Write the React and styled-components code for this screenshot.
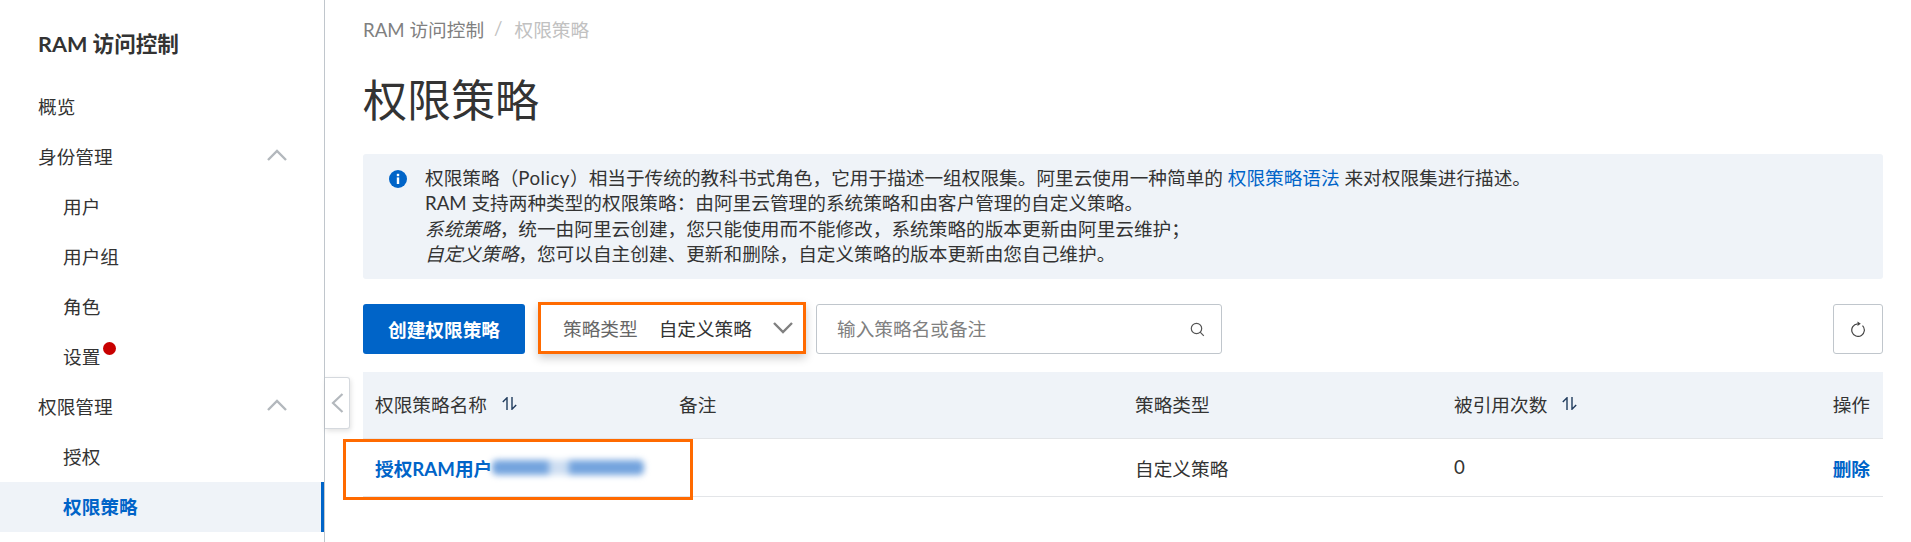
import React from 'react';
import styled, { createGlobalStyle } from 'styled-components';

const GlobalStyle = createGlobalStyle`
    html, body {
        margin: 0;
        padding: 0;
        background: #fff;
        overflow: hidden;
    }
    body {
        font-family: Lato, "Noto Sans CJK SC", sans-serif;
        font-size: 18.67px;
        color: #333;
    }
    * {
        box-sizing: border-box;
    }
`;

const Page = styled.div`
    display: flex;
    width: 1911px;
    height: 542px;
    overflow: hidden;
`;

const Sidebar = styled.aside`
    flex: none;
    width: 325px;
    height: 100%;
    border-right: 1px solid #c0c6cc;
`;

const SideTitle = styled.div`
    height: 82px;
    padding: 29px 0 0 38px;
    font-size: 21.6px;
    line-height: 30px;
    font-weight: 700;
`;

const NavRow = styled.div`
    position: relative;
    display: flex;
    align-items: center;
    justify-content: space-between;
    height: 50px;
    padding: 0 33px 4px ${(p) => (p.$sub ? '63px' : '38px')};
    color: ${(p) => (p.$active ? '#0064c8' : '#333')};
    font-weight: ${(p) => (p.$active ? 700 : 400)};
    background: ${(p) => (p.$active ? '#eff3f8' : 'transparent')};
    border-right: 3px solid ${(p) => (p.$active ? '#0064c8' : 'transparent')};
`;

const NavLabel = styled.span`
    position: relative;
`;

const RedDot = styled.i`
    position: absolute;
    top: 0;
    right: -16px;
    width: 13px;
    height: 13px;
    border-radius: 50%;
    background: #c80000;
`;

const CollapseHandle = styled.div`
    position: absolute;
    left: 325px;
    top: 377px;
    width: 25px;
    height: 52px;
    display: flex;
    align-items: center;
    justify-content: center;
    background: #fff;
    border: 1px solid #d5d9de;
    border-left: none;
    border-radius: 0 3px 3px 0;
    box-shadow: 1px 2px 5px rgba(0, 0, 0, 0.12);
`;

const Main = styled.main`
    flex: 1;
    min-width: 0;
    padding: 0 28px 0 38px;
`;

const Breadcrumb = styled.div`
    display: flex;
    align-items: center;
    gap: 10px;
    height: 58px;
    padding-bottom: 2px;
    color: #808080;
`;

const CrumbSep = styled.span`
    margin-right: 2px;
    color: #c1c1c1;
`;

const CrumbCurrent = styled.span`
    color: #c1c1c1;
`;

const PageTitle = styled.h1`
    margin: 0;
    height: 96px;
    padding-top: 13px;
    font-size: 44px;
    line-height: 58px;
    font-weight: 400;
    color: #333;
`;

const Notice = styled.div`
    display: flex;
    gap: 18px;
    height: 125px;
    padding: 12px 0 0 26px;
    background: #eff3f8;
    border-radius: 3px;
    line-height: 25.33px;
`;

const NoticeIcon = styled.svg`
    flex: none;
    width: 18px;
    height: 18px;
    margin-top: 4px;
`;

const PolicyWord = styled.span`
    letter-spacing: 0.5px;
`;

const NoticeLink = styled.a`
    color: #0064c8;
`;

const NoticeItalic = styled.em`
    font-style: italic;
`;

const Toolbar = styled.div`
    display: flex;
    align-items: flex-start;
    height: 50px;
    margin-top: 25px;
`;

const PrimaryButton = styled.button`
    width: 162px;
    height: 50px;
    padding: 0 0 2px;
    border: none;
    border-radius: 3px;
    background: #0064c8;
    color: #fff;
    font: inherit;
    font-weight: 700;
`;

const SelectBox = styled.div`
    display: flex;
    align-items: center;
    width: 268px;
    height: 52px;
    margin: -2px 0 0 13px;
    padding: 0 0 1px 22px;
    background: #fff;
    border: 3px solid #ff6a00;
    box-shadow: 0 4px 9px rgba(0, 0, 0, 0.2);
`;

const SelectLabel = styled.span`
    color: #666;
    margin-right: 21px;
`;

const SelectValue = styled.span`
    color: #333;
    margin-right: 20px;
`;

const SearchBox = styled.div`
    display: flex;
    align-items: center;
    justify-content: space-between;
    width: 406px;
    height: 50px;
    margin-left: 10px;
    padding: 0 16px 3px 20px;
    border: 1px solid #c0c6cc;
    border-radius: 3px;
    color: #808080;
`;

const SearchIcon = styled.svg`
    width: 15px;
    height: 15px;
    margin-top: 3px;
`;

const RefreshButton = styled.button`
    display: flex;
    align-items: center;
    justify-content: center;
    width: 50px;
    height: 50px;
    margin-left: auto;
    padding: 0;
    background: #fff;
    border: 1px solid #c0c6cc;
    border-radius: 3px;
`;

const Table = styled.div`
    margin-top: 18px;
`;

const Row = styled.div`
    position: relative;
    display: grid;
    grid-template-columns: 304px 456px 319px 1fr auto;
    align-items: center;
    height: ${(p) => (p.$head ? '67px' : '58px')};
    padding: 0 13px ${(p) => (p.$head ? '3px' : '1px')} 0;
    background: ${(p) => (p.$head ? '#eff3f8' : '#fff')};
    border-bottom: 1px solid #e3e5e8;
`;

const Cell = styled.div`
    display: flex;
    align-items: center;
    padding-left: 12px;
`;

const SortIcon = styled.svg`
    width: 15px;
    height: 13px;
    margin-left: 15px;
`;

const NameLink = styled.a`
    color: #0064c8;
    font-weight: 700;
`;

// the name is masked in the screenshot, so this is only a smear
const BlurredName = styled.span`
    display: inline-block;
    width: 152px;
    height: 15px;
    background: linear-gradient(90deg, #74a4de 0 36%, #cfdff2 39% 49%, #74a4de 52% 100%);
    border-radius: 5px;
    filter: blur(3px);
`;

const DeleteLink = styled.a`
    color: #0064c8;
    font-weight: 700;
`;

const Highlight = styled.div`
    position: absolute;
    left: -20px;
    top: 0;
    width: 350px;
    height: 61px;
    border: 3px solid #ff6a00;
    pointer-events: none;
`;

const Chevron = ({ up }) => (
    <svg width="22" height="14" viewBox="0 0 22 14" fill="none">
        <path
            d={up ? 'M2 12 L11 3 L20 12' : 'M2 2 L11 11 L20 2'}
            stroke={up ? '#b3b8bd' : '#808080'}
            strokeWidth="2.4"
        />
    </svg>
);

const Sort = () => (
    <SortIcon viewBox="0 0 15 13" fill="none" stroke="#1f3a5c" strokeWidth="1.4">
        <path d="M5 13 V0.8 L0.8 5" />
        <path d="M10 0 V12.2 L14.2 8" />
    </SortIcon>
);

const App = () => (
    <>
        <GlobalStyle />
        <Page>
            <Sidebar>
                <SideTitle>RAM 访问控制</SideTitle>
                <NavRow>概览</NavRow>
                <NavRow>
                    身份管理
                    <Chevron up />
                </NavRow>
                <NavRow $sub>用户</NavRow>
                <NavRow $sub>用户组</NavRow>
                <NavRow $sub>角色</NavRow>
                <NavRow $sub>
                    <NavLabel>
                        设置
                        <RedDot />
                    </NavLabel>
                </NavRow>
                <NavRow>
                    权限管理
                    <Chevron up />
                </NavRow>
                <NavRow $sub>授权</NavRow>
                <NavRow $sub $active>权限策略</NavRow>
            </Sidebar>
            <CollapseHandle>
                <svg width="13" height="22" viewBox="0 0 13 22" fill="none">
                    <path d="M11.5 2 L2 11 L11.5 20" stroke="#b3b8bd" strokeWidth="2.2" />
                </svg>
            </CollapseHandle>
            <Main>
                <Breadcrumb>
                    <span>RAM 访问控制</span>
                    <CrumbSep>/</CrumbSep>
                    <CrumbCurrent>权限策略</CrumbCurrent>
                </Breadcrumb>
                <PageTitle>权限策略</PageTitle>
                <Notice>
                    <NoticeIcon viewBox="0 0 18 18">
                        <circle cx="9" cy="9" r="9" fill="#0064c8" />
                        <rect x="7.8" y="7.4" width="2.4" height="6.6" fill="#fff" />
                        <rect x="7.8" y="3.8" width="2.4" height="2.4" fill="#fff" />
                    </NoticeIcon>
                    <div>
                        权限策略（<PolicyWord>Policy</PolicyWord>）相当于传统的教科书式角色，它用于描述一组权限集。阿里云使用一种简单的 <NoticeLink>权限策略语法</NoticeLink> 来对权限集进行描述。
                        <br />
                        RAM 支持两种类型的权限策略：由阿里云管理的系统策略和由客户管理的自定义策略。
                        <br />
                        <NoticeItalic>系统策略</NoticeItalic>，统一由阿里云创建，您只能使用而不能修改，系统策略的版本更新由阿里云维护；
                        <br />
                        <NoticeItalic>自定义策略</NoticeItalic>，您可以自主创建、更新和删除，自定义策略的版本更新由您自己维护。
                    </div>
                </Notice>
                <Toolbar>
                    <PrimaryButton>创建权限策略</PrimaryButton>
                    <SelectBox>
                        <SelectLabel>策略类型</SelectLabel>
                        <SelectValue>自定义策略</SelectValue>
                        <Chevron />
                    </SelectBox>
                    <SearchBox>
                        输入策略名或备注
                        <SearchIcon viewBox="0 0 15 15" fill="none" stroke="#555" strokeWidth="1.2">
                            <circle cx="6.5" cy="6.5" r="5.2" />
                            <path d="M10.2 10.2 L13.8 13.8" />
                        </SearchIcon>
                    </SearchBox>
                    <RefreshButton>
                        <svg width="16" height="16" viewBox="0 0 16 16" fill="none" stroke="#444" strokeWidth="1.2">
                            <path d="M7.5 2.8 A6.3 6.3 0 1 0 12.5 4.6" />
                            <path d="M7.5 0.6 L10.8 2.8 L7.5 5 Z" fill="#444" stroke="none" />
                        </svg>
                    </RefreshButton>
                </Toolbar>
                <Table>
                    <Row $head>
                        <Cell>
                            权限策略名称
                            <Sort />
                        </Cell>
                        <Cell>备注</Cell>
                        <Cell>策略类型</Cell>
                        <Cell>
                            被引用次数
                            <Sort />
                        </Cell>
                        <Cell>操作</Cell>
                    </Row>
                    <Row>
                        <Highlight />
                        <Cell>
                            <NameLink>授权RAM用户</NameLink>
                            <BlurredName />
                        </Cell>
                        <Cell />
                        <Cell>自定义策略</Cell>
                        <Cell>0</Cell>
                        <Cell>
                            <DeleteLink>删除</DeleteLink>
                        </Cell>
                    </Row>
                </Table>
            </Main>
        </Page>
    </>
);

export default App;
